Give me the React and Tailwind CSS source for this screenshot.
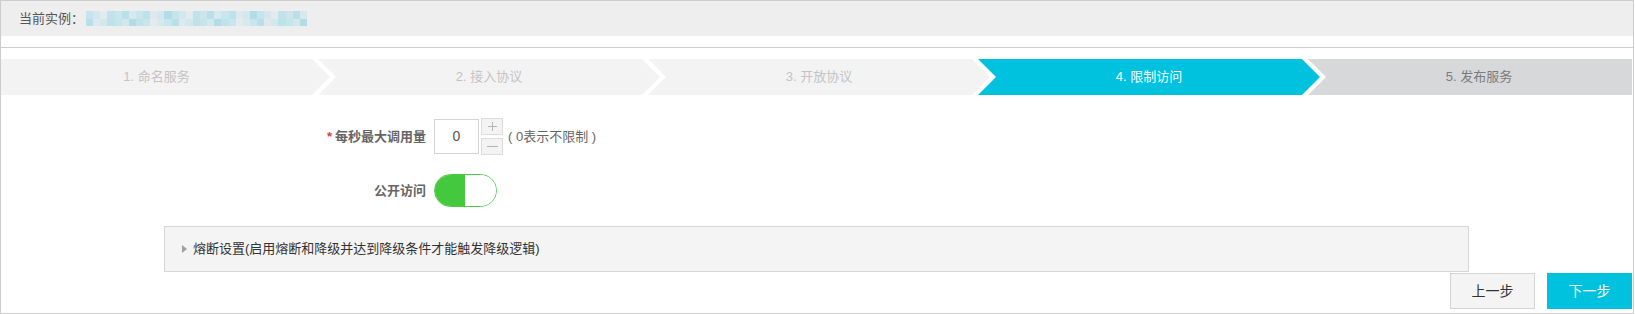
import React from 'react';

const mosaic = [
  'bg-[#c4e5ec]', 'bg-[#d0e8ee]', 'bg-[#bde2ea]', 'bg-[#dde9ec]', 'bg-[#c8e6ed]',
  'bg-[#b8e0e9]', 'bg-[#d6e9ed]', 'bg-[#cae5ec]', 'bg-[#e2ebed]', 'bg-[#c0e3eb]',
  'bg-[#d2e8ed]', 'bg-[#b2dde7]',
];

const steps = [
  { label: '1. 命名服务', kind: 'done' },
  { label: '2. 接入协议', kind: 'done' },
  { label: '3. 开放协议', kind: 'done' },
  { label: '4. 限制访问', kind: 'active' },
  { label: '5. 发布服务', kind: 'todo' },
];

const Mosaic = () => {
  const cells = [];
  for (let r = 0; r < 2; r++) {
    for (let c = 0; c < 31; c++) {
      cells.push(<div key={r + '-' + c} className={mosaic[(c * 7 + r * 5 + (c % 3) * 3) % mosaic.length]} />);
    }
  }
  return <div className="ml-[2px] grid h-[15px] w-[221px] grid-cols-[repeat(31,1fr)] grid-rows-2">{cells}</div>;
};

const Steps = () => (
  <div className="mt-[11px] flex h-[36px] pr-[1px]">
    {steps.map((s, i) => {
      let shape = 'w-[342px] -ml-[12px] pl-[18px] pr-[18px] [clip-path:polygon(0_0,calc(100%_-_18px)_0,100%_50%,calc(100%_-_18px)_100%,0_100%,18px_50%)]';
      if (i === 0) shape = 'w-[329px] pr-[18px] [clip-path:polygon(0_0,calc(100%_-_18px)_0,100%_50%,calc(100%_-_18px)_100%,0_100%)]';
      if (i === 4) shape = 'flex-1 -ml-[12px] pl-[18px] [clip-path:polygon(0_0,100%_0,100%_100%,0_100%,18px_50%)]';
      const color =
        s.kind === 'active'
          ? 'bg-[#00c1de] text-white'
          : s.kind === 'todo'
          ? 'bg-[#d7d8da] text-[#7b7b7b]'
          : 'bg-[#f3f3f3] text-[#c4c4c4]';
      return (
        <div key={s.label} className={`flex shrink-0 items-center justify-center text-[13px] ${shape} ${color}`}>
          {s.label}
        </div>
      );
    })}
  </div>
);

export default function App() {
  return (
    <div className="h-[314px] w-[1634px] border border-[#cccccc] bg-white font-['Liberation_Sans','Noto_Sans_CJK_SC',sans-serif]">
      <div className="flex h-[35px] items-center bg-[#eeeeee] pl-[18px] text-[13px] text-[#555555]">
        <span>当前实例：</span>
        <Mosaic />
      </div>
      <div className="mt-[11px] border-t border-[#cccccc]" />
      <Steps />

      <div className="mt-[23px] flex items-center">
        <div className="w-[425px] text-right text-[13px] font-bold text-[#666666]">
          <span className="mr-[3px] text-[#e4393c]">*</span>每秒最大调用量
        </div>
        <div className="ml-[8px] flex h-[35px] w-[45px] items-center justify-center border border-[#d4d4d4] text-[14px] text-[#555555]">
          0
        </div>
        <div className="ml-[2px] flex flex-col gap-[3px] self-start">
          <div className="flex h-[17px] w-[22px] items-center justify-center border border-[#dcdcdc] bg-[#f3f3f3]">
            <svg width="9" height="9" viewBox="0 0 9 9"><path d="M4.5 0v9M0 4.5h9" stroke="#b5b5b5" strokeWidth="1" /></svg>
          </div>
          <div className="flex h-[17px] w-[22px] items-center justify-center border border-[#dcdcdc] bg-[#f3f3f3]">
            <svg width="11" height="9" viewBox="0 0 11 9"><path d="M0 4.5h11" stroke="#b5b5b5" strokeWidth="1" /></svg>
          </div>
        </div>
        <span className="ml-[5px] text-[13px] text-[#666666]">( 0表示不限制 )</span>
      </div>

      <div className="mt-[19px] flex items-center">
        <div className="w-[425px] text-right text-[13px] font-bold text-[#666666]">公开访问</div>
        <div className="ml-[8px] flex h-[33px] w-[63px] overflow-hidden rounded-full border border-[#4ccb45]">
          <div className="w-[30px] bg-[#44c93e]" />
          <div className="flex-1 bg-white" />
        </div>
      </div>

      <div className="ml-[163px] mt-[19px] flex h-[46px] w-[1305px] items-center border border-[#d6d6d6] bg-[#f4f4f4] pl-[17px] text-[13px] text-[#333333]">
        <span className="mr-[6px] h-0 w-0 border-y-[4px] border-l-[5px] border-y-transparent border-l-[#a0a0a0]" />
        熔断设置(启用熔断和降级并达到降级条件才能触发降级逻辑)
      </div>

      <div className="mt-px flex justify-end gap-[12px] pr-[1px]">
        <button className="flex h-[36px] w-[85px] items-center justify-center border border-[#d4d4d4] bg-[#f4f4f4] text-[14px] text-[#333333]">
          上一步
        </button>
        <button className="flex h-[36px] w-[85px] items-center justify-center bg-[#00c1de] text-[14px] text-white">
          下一步
        </button>
      </div>
    </div>
  );
}
